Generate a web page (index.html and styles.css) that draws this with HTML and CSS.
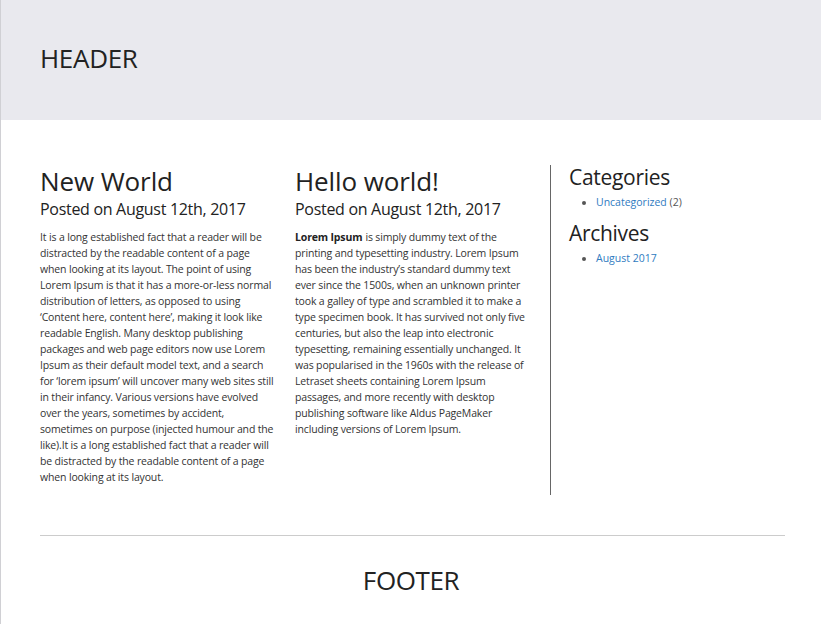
FILE: index.html
```html
<!DOCTYPE html>
<html lang="en">
<head>
<meta charset="utf-8">
<title>Blog</title>
<link rel="stylesheet" href="styles.css">
</head>
<body>
<div class="page">
  <header class="site-header">
    <h1 class="site-title">HEADER</h1>
  </header>
  <main class="content">
    <article class="post">
      <h2 class="post-title">New World</h2>
      <p class="post-meta">Posted on August 12th, 2017</p>
      <p class="post-body">It is a long established fact that a reader will be distracted by the readable content of a page when looking at its layout. The point of using Lorem Ipsum is that it has a more-or-less normal distribution of letters, as opposed to using ‘Content here, content here’, making it look like readable English. Many desktop publishing packages and web page editors now use Lorem Ipsum as their default model text, and a search for ‘lorem ipsum’ will uncover many web sites still in their infancy. Various versions have evolved over the years, sometimes by accident, sometimes on purpose (injected humour and the like).It is a long established fact that a reader will be distracted by the readable content of a page when looking at its layout.</p>
    </article>
    <article class="post">
      <h2 class="post-title">Hello world!</h2>
      <p class="post-meta">Posted on August 12th, 2017</p>
      <p class="post-body"><strong>Lorem Ipsum</strong> is simply dummy text of the printing and typesetting industry. Lorem Ipsum has been the industry’s standard dummy text ever since the 1500s, when an unknown printer took a galley of type and scrambled it to make a type specimen book. It has survived not only five centuries, but also the leap into electronic typesetting, remaining essentially unchanged. It was popularised in the 1960s with the release of Letraset sheets containing Lorem Ipsum passages, and more recently with desktop publishing software like Aldus PageMaker including versions of Lorem Ipsum.</p>
    </article>
    <aside class="sidebar">
      <h3 class="widget-title">Categories</h3>
      <ul class="widget-list">
        <li><a href="#">Uncategorized</a> <span class="count">(2)</span></li>
      </ul>
      <h3 class="widget-title">Archives</h3>
      <ul class="widget-list">
        <li><a href="#">August 2017</a></li>
      </ul>
    </aside>
  </main>
  <footer class="site-footer">
    <p class="footer-text">FOOTER</p>
  </footer>
</div>
</body>
</html>
```

FILE: styles.css
```css
* { box-sizing: border-box; }
html, body { margin: 0; padding: 0; background: #fff; }
body {
  font-family: "Open Sans", "Noto Sans", sans-serif;
  color: #333;
}
.page {
  border-left: 1px solid #d0d0d4;
  min-height: 624px;
}
.site-header {
  background: #e9e9ee;
  height: 120px;
  padding: 0 39px 5px;
  display: flex;
  align-items: center;
}
.site-title {
  margin: 0;
  font-weight: 400;
  font-size: 26px;
  color: #222;
  letter-spacing: -0.3px;
}
.content {
  display: grid;
  grid-template-columns: 235px 235px 1fr;
  column-gap: 20px;
  margin: 45px 36px 0 39px;
  padding-bottom: 40px;
  border-bottom: 1px solid #ccc;
}
.post-title {
  margin: 0;
  font-weight: 400;
  font-size: 26px;
  line-height: 32px;
  color: #222;
  letter-spacing: -0.1px;
}
.post-meta {
  margin: 0 0 8px;
  font-size: 16px;
  line-height: 24px;
  color: #222;
  letter-spacing: -0.3px;
}
.post-body {
  margin: 0;
  font-size: 10.5px;
  line-height: 16px;
  color: #333;
  letter-spacing: -0.15px;
}
.post-body strong {
  font-weight: 700;
  color: #222;
  margin-right: 0.5px;
}
.sidebar {
  border-left: 1px solid #666;
  padding-left: 18px;
  height: 330px;
}
.widget-title {
  margin: -2px 0 2px;
  font-weight: 400;
  font-size: 21px;
  line-height: 28px;
  color: #222;
  letter-spacing: -0.3px;
}
.widget-list {
  margin: 0 0 10px;
  padding-left: 27px;
  font-size: 10.5px;
  line-height: 18px;
  color: #555;
}
.widget-list a { color: #2f7bbf; text-decoration: none; }
.site-footer {
  text-align: center;
  padding-top: 26px;
}
.footer-text {
  margin: 0;
  font-size: 26px;
  color: #222;
  letter-spacing: -0.4px;
}
```
